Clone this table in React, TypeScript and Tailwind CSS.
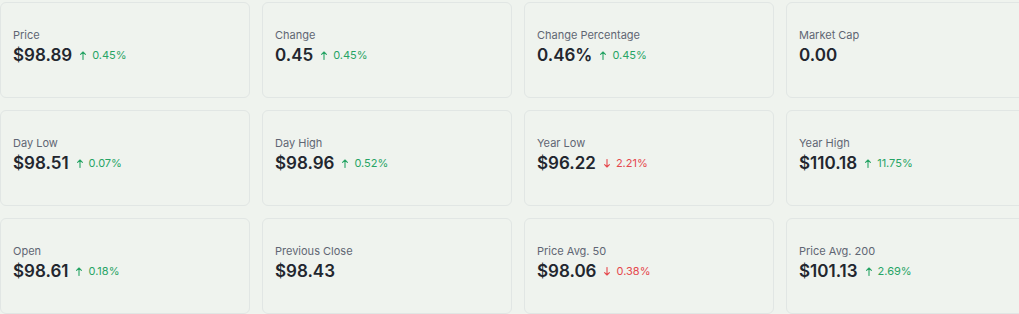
import { ReactNode } from "react";

type Stat = {
  label: string;
  value: string;
  change?: number;
};

const stats: Stat[] = [
  { label: "Price", value: "$98.89", change: 0.45 },
  { label: "Change", value: "0.45", change: 0.45 },
  { label: "Change Percentage", value: "0.46%", change: 0.45 },
  { label: "Market Cap", value: "0.00" },
  { label: "Day Low", value: "$98.51", change: 0.07 },
  { label: "Day High", value: "$98.96", change: 0.52 },
  { label: "Year Low", value: "$96.22", change: -2.21 },
  { label: "Year High", value: "$110.18", change: 11.75 },
  { label: "Open", value: "$98.61", change: 0.18 },
  { label: "Previous Close", value: "$98.43" },
  { label: "Price Avg. 50", value: "$98.06", change: -0.38 },
  { label: "Price Avg. 200", value: "$101.13", change: 2.69 },
];

function Delta({ change }: { change: number }) {
  const up = change >= 0;
  return (
    <span className={`ml-2 flex items-center gap-[6px] text-[11px] ${up ? "text-[#27a465]" : "text-[#e5484d]"}`}>
      <svg width="6" height="9" viewBox="0 0 6 9" fill="none" stroke="currentColor" strokeWidth="1.1" strokeLinecap="round" strokeLinejoin="round" className={up ? "" : "rotate-180"}>
        <path d="M3 8.5V1M0.6 3.4L3 1l2.4 2.4" />
      </svg>
      {Math.abs(change).toFixed(2)}%
    </span>
  );
}

function Card({ children }: { children: ReactNode }) {
  return (
    <div className="h-24 rounded-md border border-[#e1e6e4] bg-[#eff3ee] px-3 pt-6">
      {children}
    </div>
  );
}

export default function App() {
  return (
    <div className="h-[314px] w-full overflow-hidden bg-[#eff3ee] pt-[2px] font-['Inter',sans-serif]">
      <div className="grid w-[1036px] grid-cols-[repeat(4,250px)] gap-3">
        {stats.map((s) => (
          <Card key={s.label}>
            <div className="text-[11px] leading-4 text-[#5f6673]">{s.label}</div>
            <div className="flex items-center">
              <span className="text-[17px] font-semibold leading-6 text-[#22262e]">{s.value}</span>
              {s.change !== undefined && <Delta change={s.change} />}
            </div>
          </Card>
        ))}
      </div>
    </div>
  );
}
